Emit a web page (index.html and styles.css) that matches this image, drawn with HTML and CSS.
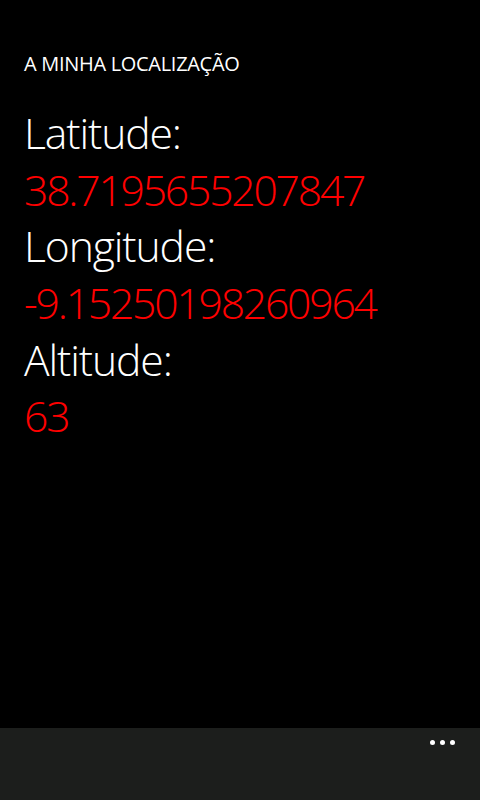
FILE: index.html
```html
<!DOCTYPE html>
<html lang="pt">
<head>
<meta charset="utf-8">
<title>A minha localização</title>
<link rel="stylesheet" href="styles.css">
</head>
<body>
<div class="screen">
  <main class="content">
    <h1 class="app-title">A MINHA LOCALIZAÇÃO</h1>
    <div class="fields">
      <div class="label">Latitude:</div>
      <div class="value">38.7195655207847</div>
      <div class="label">Longitude:</div>
      <div class="value">-9.15250198260964</div>
      <div class="label">Altitude:</div>
      <div class="value">63</div>
    </div>
  </main>
  <footer class="app-bar">
    <div class="more" aria-label="more">
      <span class="dot"></span><span class="dot"></span><span class="dot"></span>
    </div>
  </footer>
</div>
</body>
</html>
```
FILE: styles.css
```css
html, body {
  margin: 0;
  padding: 0;
  background: #000;
}
.screen {
  width: 480px;
  height: 800px;
  display: flex;
  flex-direction: column;
  background: #000;
  font-family: "Open Sans", "Noto Sans", sans-serif;
  color: #fff;
}
.content {
  flex: 1;
  padding: 50px 24px 0 24px;
}
.app-title {
  margin: 0;
  font-size: 20px;
  line-height: 28px;
  font-weight: 400;
  letter-spacing: -0.3px;
}
.fields {
  margin-top: 27px;
}
.label, .value {
  font-size: 42.67px;
  line-height: 56.67px;
  font-weight: 300;
  white-space: nowrap;
}
.label {
  color: #fff;
  letter-spacing: -1.1px;
}
.value {
  color: #ff0000;
  letter-spacing: -2.2px;
}
.app-bar {
  height: 72px;
  background: #1c1e1c;
  display: flex;
  justify-content: flex-end;
  align-items: flex-start;
}
.more {
  display: flex;
  gap: 5px;
  padding: 12px 25px 0 0;
}
.dot {
  width: 5px;
  height: 5px;
  border-radius: 50%;
  background: #fff;
}
```
